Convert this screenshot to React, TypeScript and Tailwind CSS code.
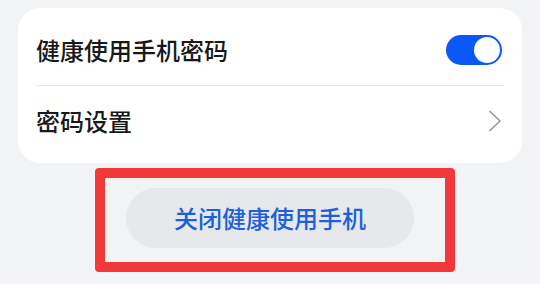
const font = {fontFamily: '"Noto Sans CJK SC", "Noto Sans", sans-serif'};

export default function App() {
  return (
    <main className="relative h-[284px] w-[540px] overflow-hidden bg-[#f1f3f5] px-[18px] pt-2" style={font}>
      <section className="rounded-[22px] bg-white px-[18px] pt-[7px] pb-[7px]">
        <div className="flex h-[70px] items-center justify-between">
          <span className="text-[24px] font-medium leading-none text-[#191919]">健康使用手机密码</span>
          <div className="mr-[2px] flex h-[30px] w-[56px] items-center justify-end rounded-full bg-[#0a59f7] pr-[2px]">
            <div className="h-[26px] w-[26px] rounded-full bg-white" />
          </div>
        </div>
        <div className="h-px bg-[#e6e6e6]" />
        <div className="flex h-[70px] items-center justify-between">
          <span className="text-[24px] font-medium leading-none text-[#191919]">密码设置</span>
          <svg width="14" height="22" viewBox="0 0 14 22" className="mr-[2px]" fill="none">
            <path d="M2 1.5 L12 11 L2 20.5" stroke="#9a9a9a" strokeWidth="1.7" strokeLinecap="round" strokeLinejoin="round" />
          </svg>
        </div>
      </section>

      <div className="mt-[25px] flex justify-center">
        <button className="flex h-[60px] w-[288px] items-center justify-center rounded-full bg-[#e6e8eb] text-[24px] font-medium leading-none text-[#1d5fdc]">
          关闭健康使用手机
        </button>
      </div>

      {/* annotation box drawn over the button */}
      <div className="pointer-events-none absolute left-[95px] top-[168px] h-[104px] w-[360px] rounded-[4px] border-[10px] border-[#f3383a]" />
    </main>
  );
}
